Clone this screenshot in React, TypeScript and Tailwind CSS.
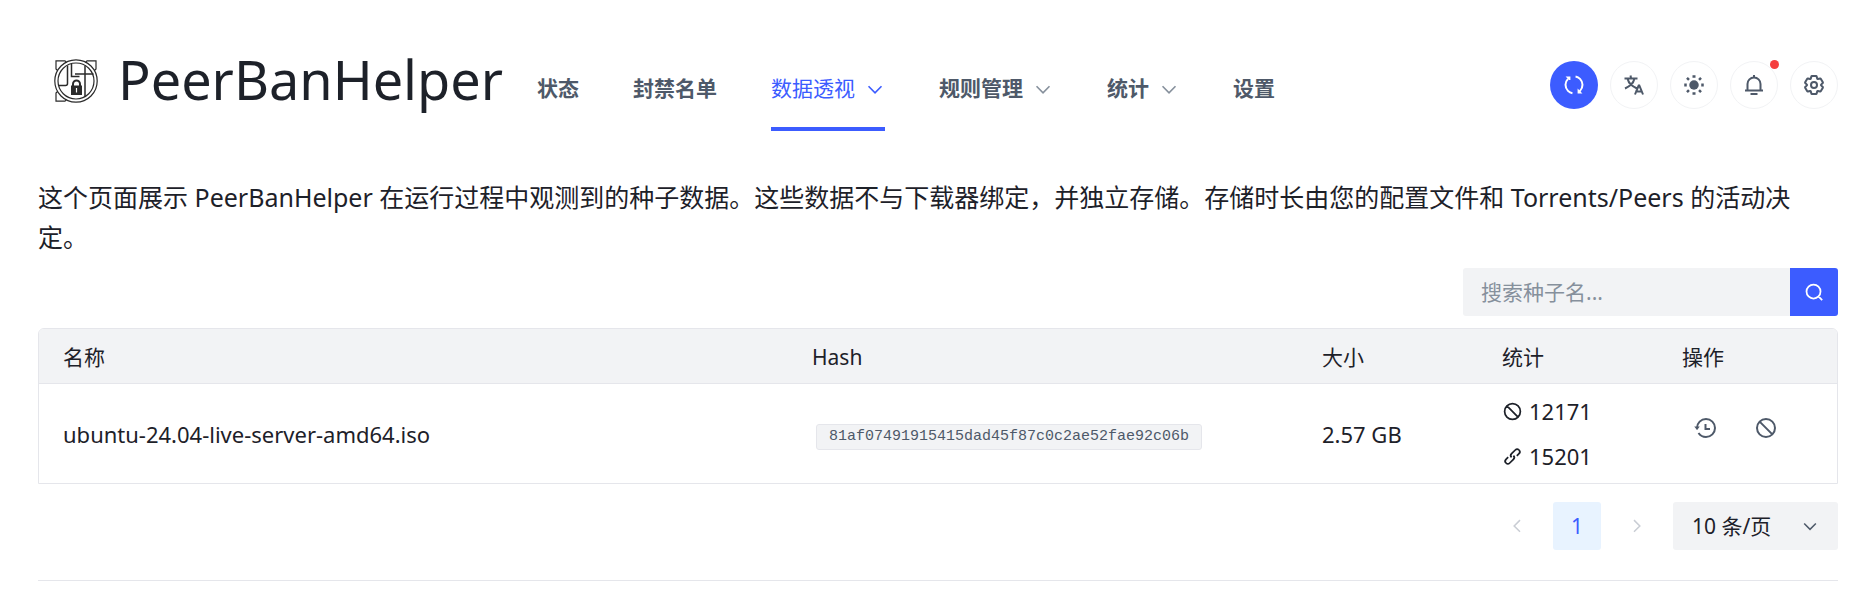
import type { ReactNode } from 'react';

const ICONS: Record<string, ReactNode> = {
  sync: (
    <>
      <path d="M11.98 11.703c-6.64 6.64-6.64 17.403 0 24.042a16.922 16.922 0 0 0 8.942 4.7M34.603 37.156l1.414-1.415c6.64-6.639 6.64-17.402 0-24.041A16.922 16.922 0 0 0 27.075 7" />
      <path d="m14.81 11.982-1.414-1.414-1.414-1.414h2.829v2.828ZM33.192 36.02l1.414 1.414 1.414 1.415h-2.828V36.02Z" />
    </>
  ),
  language: (
    <path d="m42 43-2.385-6M26 43l2.384-6m11.231 0-.795-2-4.18-10h-1.28l-4.181 10-.795 2m11.231 0h-11.23M17 5l1 5M5 11h26M11 11s1.889 7.826 6.611 12.174C22.333 27.522 30 31 30 31M25 11s-1.889 7.826-6.611 12.174C13.667 27.522 6 31 6 31" />
  ),
  sun: (
    <g fill="currentColor" stroke="none">
      <circle cx="24" cy="24" r="9.5" />
      <path d="M21 4.5h6v5h-6zM21 38.500h6v5h-6zM4.500 21h5v6h-5zM38.500 21h5v6h-5zM8.200 11.700l3.500-3.500 4 4-3.500 3.500zM32.300 35.800l3.500-3.500 4 4-3.500 3.500zM36.300 8.200l3.500 3.500-4 4-3.500-3.500zM12.200 32.300l3.500 3.500-4 4-3.500-3.500z" />
    </g>
  ),
  bell: <path d="M24 9c7.18 0 13 5.82 13 13v13H11V22c0-7.18 5.82-13 13-13Zm0 0V4M6 35h36m-25 7h14" />,
  settings: (
    <>
      <path d="M18.797 6.732A1 1 0 0 1 19.76 6h8.48a1 1 0 0 1 .964.732l1.285 4.628a1 1 0 0 0 1.213.7l4.651-1.2a1 1 0 0 1 1.116.468l4.24 7.344a1 1 0 0 1-.153 1.2L38.193 23.3a1 1 0 0 0 0 1.402l3.364 3.427a1 1 0 0 1 .153 1.2l-4.24 7.344a1 1 0 0 1-1.116.468l-4.65-1.2a1 1 0 0 0-1.214.7l-1.285 4.628a1 1 0 0 1-.964.732h-8.48a1 1 0 0 1-.963-.732L17.51 36.64a1 1 0 0 0-1.213-.7l-4.65 1.2a1 1 0 0 1-1.116-.468l-4.24-7.344a1 1 0 0 1 .153-1.2L9.809 24.7a1 1 0 0 0 0-1.402l-3.364-3.427a1 1 0 0 1-.153-1.2l4.24-7.344a1 1 0 0 1 1.116-.468l4.65 1.2a1 1 0 0 0 1.213-.7l1.286-4.628Z" />
      <path d="M30 24a6 6 0 1 1-12 0 6 6 0 0 1 12 0Z" />
    </>
  ),
  search: (
    <path d="M33.072 33.071c6.248-6.248 6.248-16.379 0-22.627-6.249-6.249-16.38-6.249-22.628 0-6.248 6.248-6.248 16.379 0 22.627 6.248 6.248 16.38 6.248 22.628 0Zm0 0 8.485 8.485" />
  ),
  ban: (
    <path d="M36.728 36.728c7.03-7.03 7.03-18.427 0-25.456-7.03-7.03-18.427-7.03-25.456 0m25.456 25.456c-7.03 7.03-18.427 7.03-25.456 0-7.03-7.03-7.03-18.427 0-25.456m25.456 25.456L11.272 11.272" />
  ),
  link: (
    <path d="m14.1 25.414-4.95 4.95a6 6 0 0 0 8.486 8.485l8.485-8.485a6 6 0 0 0 0-8.485m7.779.707 4.95-4.95a6 6 0 1 0-8.486-8.485l-8.485 8.485a6 6 0 0 0 0 8.485" />
  ),
  history: (
    <>
      <path d="M6 24c0-9.941 8.059-18 18-18s18 8.059 18 18-8.059 18-18 18c-6.260 0-11.775-3.197-15-8.047M23 16v10h9" />
      <path d="M6 25l-1.500-2h3z" />
    </>
  ),
  down: <path d="M39.6 17.443 24.043 33 8.487 17.443" />,
  left: <path d="M32 8.4 16.444 23.956 32 39.513" />,
  right: <path d="m16 39.513 15.556-15.557L16 8.4" />,
};

function Icon({ name, className }: { name: string; className: string }) {
  return (
    <svg viewBox="0 0 48 48" fill="none" stroke="currentColor" strokeWidth="4" aria-hidden="true" className={`shrink-0 ${className}`}>
      {ICONS[name]}
    </svg>
  );
}

function Logo() {
  return (
    <svg viewBox="0 0 44 44" fill="none" stroke="#2b2b2b" strokeWidth="1.2" aria-hidden="true" className="size-11 shrink-0">
      <circle cx="22" cy="22" r="21.2" />
      <circle cx="22" cy="22" r="18" />
      <path d="M3.500 11.500 2 10V1.800h9l1.500 1.500M31.500 3.300l1.500-1.500h9V10l-1.500 1.500M3.500 32.500 2 34v8.200h9l1.500-1.500" />
      <path d="M13.500 6.500v18q0 2-2 2H5M17.500 5v12.500h8M21 15h18.500M31 6.500v31" strokeWidth="1.500" />
      <path d="M19 27v-2a3.500 3.500 0 0 1 7 0v2" strokeWidth="2" />
      <path d="M17 26.500h11v9.500H17z" fill="#2b2b2b" stroke="none" />
      <path d="M22.500 29v4.500" stroke="#fff" />
    </svg>
  );
}

const NAV = [
  { label: '状态' },
  { label: '封禁名单' },
  { label: '数据透视', menu: true, active: true },
  { label: '规则管理', menu: true },
  { label: '统计', menu: true },
  { label: '设置' },
];

const TOOLS = [
  { icon: 'sync', label: '自动刷新', primary: true },
  { icon: 'language', label: '语言' },
  { icon: 'sun', label: '主题' },
  { icon: 'bell', label: '通知', dot: true },
  { icon: 'settings', label: '偏好设置' },
];

const ROWS = [
  {
    name: 'ubuntu-24.04-live-server-amd64.iso',
    hash: '81af07491915415dad45f87c0c2ae52fae92c06b',
    size: '2.57 GB',
    bans: 12171,
    peers: 15201,
  },
];

export default function App() {
  return (
    <div className="bg-white pt-[38px] pr-[30px] pb-[22px] pl-[38px] font-['Noto_Sans','Noto_Sans_CJK_SC',sans-serif] text-[21px] leading-[33px] text-[#1d2129]">
      <header className="flex h-[93px] items-center">
        <a href="#" className="flex items-center gap-5 pb-2 pl-4">
          <Logo />
          <span className="pb-1 text-[54px] leading-[80px]">PeerBanHelper</span>
        </a>
        <nav className="ml-[34px] flex gap-[54px] self-stretch">
          {NAV.map((item) => (
            <a
              key={item.label}
              href="#"
              className={`flex items-center gap-[10px] border-b-4 pt-4 pb-1 whitespace-nowrap ${
                item.active ? 'border-[#3c5cff] text-[#3c5cff]' : 'border-transparent font-bold text-[#4e5969]'
              }`}
            >
              {item.label}
              {item.menu && <Icon name="down" className={item.active ? 'size-5' : 'size-5 text-[#86909c]'} />}
            </a>
          ))}
        </nav>
        <div className="ml-auto flex gap-3">
          {TOOLS.map((tool) => (
            <button
              key={tool.icon}
              type="button"
              aria-label={tool.label}
              className={`relative flex size-12 items-center justify-center rounded-full ${
                tool.primary ? 'bg-[#3c5cff] text-white' : 'border border-[#f2f3f5] text-[#4e5969]'
              }`}
            >
              <Icon name={tool.icon} className="size-6" />
              {tool.dot && <span className="absolute -top-[2px] -right-[2px] size-[9px] rounded-full bg-[#f53f3f]" />}
            </button>
          ))}
        </div>
      </header>

      <main>
        <p className="mt-[46px] text-[25px] leading-[40px]">
          这个页面展示 PeerBanHelper 在运行过程中观测到的种子数据。这些数据不与下载器绑定，并独立存储。存储时长由您的配置文件和
          Torrents/Peers 的活动决定。
        </p>

        <form className="mt-[11px] ml-auto flex h-12 w-[375px]" onSubmit={(e) => e.preventDefault()}>
          <input
            type="text"
            aria-label="搜索种子名"
            placeholder="搜索种子名..."
            className="min-w-0 flex-1 rounded-l-[3px] bg-[#f2f3f5] px-[18px] outline-none placeholder:text-[#86909c]"
          />
          <button type="submit" aria-label="搜索" className="flex w-12 items-center justify-center rounded-r-[3px] bg-[#3c5cff] text-white">
            <Icon name="search" className="size-[21px]" />
          </button>
        </form>

        <div className="mt-3 overflow-hidden rounded-t-md border border-[#e5e6eb]">
          <table className="w-full table-fixed border-collapse text-left">
            <colgroup>
              <col />
              <col className="w-[510px]" />
              <col className="w-[180px]" />
              <col className="w-[180px]" />
              <col className="w-[179px]" />
            </colgroup>
            <thead>
              <tr className="h-[54px] border-b border-[#e5e6eb] bg-[#f2f3f5]">
                {['名称', 'Hash', '大小', '统计', '操作'].map((title) => (
                  <th key={title} scope="col" className="pt-[3px] pr-6 pl-6 font-normal">
                    {title}
                  </th>
                ))}
              </tr>
            </thead>
            <tbody className="text-[22px]">
              {ROWS.map((row) => (
                <tr key={row.hash} className="h-[100px]">
                  <td className="pt-[2px] pr-6 pl-6">{row.name}</td>
                  <td className="pt-[2px] pr-6 pl-7">
                    <code className="inline-block rounded-[3px] border border-[#e5e6eb] bg-[#f2f3f5] px-3 align-middle font-['Liberation_Mono',monospace] text-[15px] leading-6 text-[#4e5969]">
                      {row.hash}
                    </code>
                  </td>
                  <td className="pt-[2px] pr-6 pl-6">{row.size}</td>
                  <td className="pt-[2px] pr-6 pl-6">
                    <div className="flex flex-col gap-3">
                      <span className="flex items-center gap-[6px]">
                        <Icon name="ban" className="size-[21px]" />
                        {row.bans}
                      </span>
                      <span className="flex items-center gap-[6px]">
                        <Icon name="link" className="size-[21px]" />
                        {row.peers}
                      </span>
                    </div>
                  </td>
                  <td className="pt-[2px] pl-6">
                    <div className="flex gap-3 pb-3 text-[#4e5969]">
                      <button type="button" aria-label="历史记录" className="flex size-12 items-center justify-center">
                        <Icon name="history" className="size-6" />
                      </button>
                      <button type="button" aria-label="封禁记录" className="flex size-12 items-center justify-center">
                        <Icon name="ban" className="size-6" />
                      </button>
                    </div>
                  </td>
                </tr>
              ))}
            </tbody>
          </table>
        </div>

        <div className="mt-[18px] flex items-center justify-end gap-3">
          <button type="button" aria-label="上一页" disabled className="flex size-12 items-center justify-center text-[#c9cdd4]">
            <Icon name="left" className="size-[18px]" />
          </button>
          <button type="button" aria-current="page" className="size-12 rounded-[3px] bg-[#e8f3ff] text-[#3c5cff]">
            1
          </button>
          <button type="button" aria-label="下一页" disabled className="flex size-12 items-center justify-center text-[#c9cdd4]">
            <Icon name="right" className="size-[18px]" />
          </button>
          <div className="relative w-[165px]">
            <select
              aria-label="每页条数"
              defaultValue="10"
              className="h-12 w-full appearance-none rounded-[3px] bg-[#f2f3f5] pr-10 pl-[19px] outline-none"
            >
              <option value="10">10 条/页</option>
              <option value="20">20 条/页</option>
            </select>
            <Icon name="down" className="pointer-events-none absolute top-[15px] right-[19px] size-[18px] text-[#4e5969]" />
          </div>
        </div>
      </main>

      <hr className="mt-[30px] border-[#e5e6eb]" />
    </div>
  );
}
